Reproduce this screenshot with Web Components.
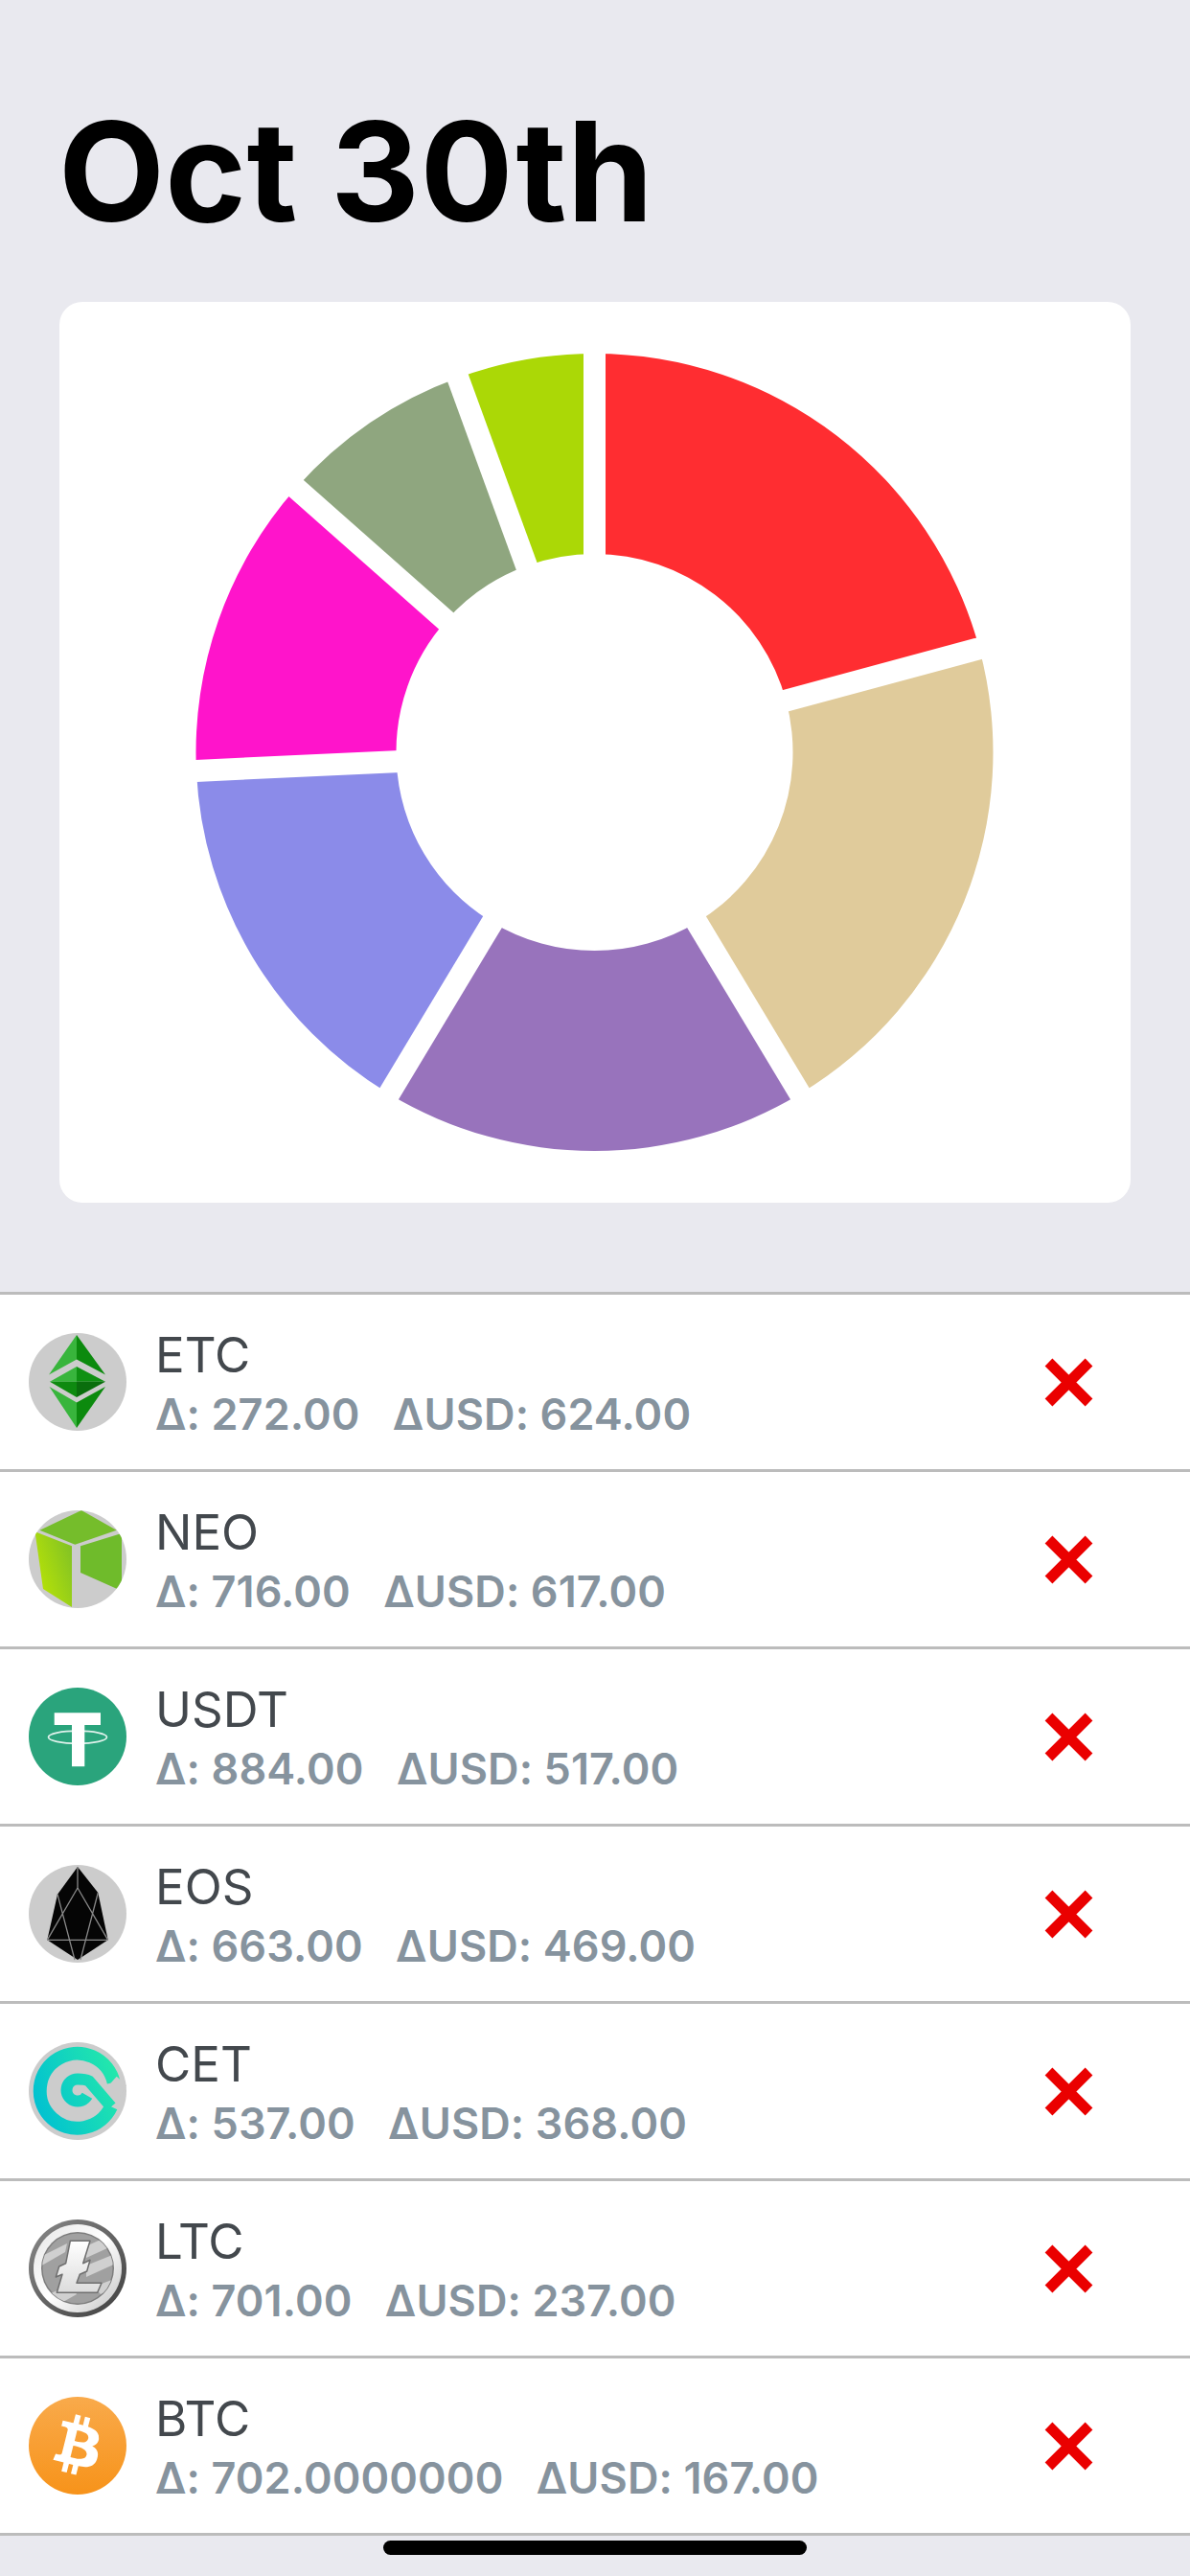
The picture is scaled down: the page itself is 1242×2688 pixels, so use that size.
<!DOCTYPE html>
<html lang="en"><head><meta charset="utf-8"><title>Oct 30th</title>
<style>
html,body{margin:0;padding:0;background:#e9e9ef;font-family:Inter,"Liberation Sans",sans-serif}
</style></head><body>
<portfolio-screen title="Oct 30th">
  <donut-chart values="624,617,517,469,368,237,167" colors="#ff2d31,#e0cb9b,#9873bc,#8b8be9,#ff14cb,#8fa67f,#abd806"></donut-chart>
  <coin-row slot="list" coin="ETC" delta="272.00" usd="624.00"></coin-row>
  <coin-row slot="list" coin="NEO" delta="716.00" usd="617.00"></coin-row>
  <coin-row slot="list" coin="USDT" delta="884.00" usd="517.00"></coin-row>
  <coin-row slot="list" coin="EOS" delta="663.00" usd="469.00"></coin-row>
  <coin-row slot="list" coin="CET" delta="537.00" usd="368.00"></coin-row>
  <coin-row slot="list" coin="LTC" delta="701.00" usd="237.00"></coin-row>
  <coin-row slot="list" coin="BTC" delta="702.0000000" usd="167.00"></coin-row>
</portfolio-screen>
<script>
const ICONS={
ETC:`<circle cx="51" cy="51" r="51" fill="#ccc"/>
<path d="M50 2 21 43.5 50 27.5z" fill="#38b53c"/><path d="M50 2 80 43.5 50 27.5z" fill="#0c8a0e"/>
<path d="M50 35 22 50.7 50 50.7z" fill="#38b53c"/><path d="M50 35 80 50.7 50 50.7z" fill="#0f9012"/>
<path d="M22 50.7 50 67V50.7z" fill="#0e8a10"/><path d="M80 50.7 50 67V50.7z" fill="#0a6e0d"/>
<path d="M21.500 56 50 72.500V99z" fill="#38b53c"/><path d="M80 56 50 72.500V99z" fill="#0c8a0e"/>`,
NEO:`<defs><clipPath id="c"><circle cx="51" cy="51" r="51"/></clipPath><linearGradient id="g" x1="0" y1="1" x2="1" y2="0.3"><stop offset="0" stop-color="#c2e900"/><stop offset="1" stop-color="#85c423"/></linearGradient></defs>
<circle cx="51" cy="51" r="51" fill="#ccc"/><g clip-path="url(#c)">
<path d="M55 0 11.500 20.700 48.300 35.700 91.700 20.700z" fill="#75bd2b"/>
<path d="M6.500 22.300 45 37.300V101L15 82z" fill="url(#g)"/>
<path d="M54 37.300 97 24V82L91.700 81.700 54 65z" fill="#6fbb2b"/></g>`,
USDT:`<circle cx="51" cy="51" r="51" fill="#2aa47c"/>
<path d="M26.700 26.300H75V39H58.300V82.300H45V39H26.700z" fill="#fff"/>
<ellipse cx="51" cy="51.700" rx="30.500" ry="6.500" fill="none" stroke="#fff" stroke-opacity=".85" stroke-width="1.700"/>`,
EOS:`<circle cx="51" cy="51" r="51" fill="#ccc"/>
<path d="M51 2 72.300 29 82.700 78.300 51 99 19.300 78.300 30 30.700z" fill="#050505"/>
<path d="M51 2V24M51 24 19.300 78.300M51 24 82.700 78.300M19.300 78.300H82.700M30 30.700 48 99M72.300 29 54 99" fill="none" stroke="#8a8a8a" stroke-width="1.300"/>`,
CET:`<defs><linearGradient id="g" gradientUnits="userSpaceOnUse" x1="5" y1="70" x2="95" y2="35"><stop offset="0" stop-color="#00c0d2"/><stop offset="1" stop-color="#24e8ab"/></linearGradient></defs>
<circle cx="51" cy="51" r="51" fill="#ccc"/>
<path d="M88.700 42A39 39 0 1 0 86 67.300" fill="none" stroke="url(#g)" stroke-width="14"/>
<path d="M91.700 35.700 80 49 92 62 102 45z" fill="#ccc"/>
<path d="M86 67.300 63 40.500Q59 38.500 51 38.500A11.500 11.500 0 1 0 61 55.700" fill="none" stroke="url(#g)" stroke-width="12" stroke-linejoin="miter"/>`,
LTC:`<defs><linearGradient id="o" x1="0" y1="0" x2="1" y2="1"><stop offset="0" stop-color="#8a8a8a"/><stop offset="1" stop-color="#3f3f3f"/></linearGradient>
<linearGradient id="r" x1="0" y1="0" x2="1" y2="1"><stop offset="0" stop-color="#e6e6e6"/><stop offset=".5" stop-color="#fff"/><stop offset="1" stop-color="#c4c4c4"/></linearGradient>
<linearGradient id="l" x1="0" y1="0" x2="0" y2="1"><stop offset="0" stop-color="#fff"/><stop offset="1" stop-color="#dcdcdc"/></linearGradient>
<clipPath id="d"><circle cx="51" cy="51" r="37"/></clipPath></defs>
<circle cx="51" cy="51" r="51" fill="url(#o)"/><circle cx="51" cy="51" r="46" fill="url(#r)"/><circle cx="51" cy="51" r="38" fill="#7d7d7d"/>
<circle cx="51" cy="51" r="36.500" fill="#a0a0a0"/>
<g clip-path="url(#d)" fill="#d0d0d0"><path d="M55 30 95 12V24L60 40z"/><path d="M60 48 95 34V44L60 60z"/><path d="M10 82 45 68 50 78 20 95z"/><path d="M68 70 95 60V68L75 78z"/><path d="M10 40 40 25 38 34 10 50z"/></g>
<path d="M43.300 22.300H64L56.700 45.700 64 42.300 60.700 54 53.300 57.300 50 66.300H76L71.700 76.300H29.300L35 57.300 28.300 60 31.700 49 38.700 45.700z" fill="url(#l)" stroke="#6f6f6f" stroke-width="1.500" stroke-linejoin="round"/>`,
BTC:`<defs><linearGradient id="g" x1="0" y1="0" x2="0" y2="1"><stop offset="0" stop-color="#f9aa4b"/><stop offset="1" stop-color="#f7931a"/></linearGradient></defs>
<circle cx="51" cy="51" r="51" fill="url(#g)"/>
<g transform="translate(51 51) scale(1.56) translate(-32 -32)"><path fill="#fff" d="M46.100 27.400c.6-4.300-2.600-6.600-7.100-8.100l1.500-5.800-3.500-.9-1.400 5.700c-.9-.2-1.900-.4-2.800-.7l1.400-5.700-3.500-.9-1.500 5.800c-.8-.2-1.500-.3-2.200-.5l-4.900-1.200-.9 3.800s2.600.6 2.600.6c1.400.4 1.700 1.300 1.600 2l-1.600 6.500-2.300 9.200c-.2.400-.6 1-1.600.8 0 0-2.600-.6-2.600-.6l-1.700 4 4.600 1.200c.9.2 1.700.4 2.500.6l-1.500 5.900 3.500.9 1.500-5.800c1 .3 1.900.5 2.800.7l-1.500 5.800 3.500.9 1.500-5.900c6 1.100 10.600.7 12.500-4.800 1.500-4.400-.1-6.900-3.200-8.600 2.300-.5 4-2 4.500-5.100zM38 38.300c-1.100 4.400-8.400 2-10.800 1.400l1.900-7.700c2.400.6 10 1.800 8.900 6.300zm1.100-11c-1 4-7.100 2-9.100 1.500l1.700-7c2 .5 8.400 1.400 7.400 5.500z"/></g>`
};
class PortfolioScreen extends HTMLElement{
  constructor(){super();this.attachShadow({mode:'open'}).innerHTML=`<style>
  :host{display:flex;flex-direction:column;min-height:2688px;background:#e9e9ef}
  h1{margin:0;padding:95px 61px 0;height:315px;box-sizing:border-box;font:700 144px/1.17 Inter,"Liberation Sans",sans-serif;letter-spacing:.4px;color:#000;white-space:nowrap}
  .card{margin:0 62px;height:940px;background:#fff;border-radius:24px;display:flex}
  .list{margin-top:93px;display:flex;flex-direction:column}
  .home{align-self:center;width:442px;height:15px;margin-top:5px;border-radius:8px;background:#000}
  </style><h1></h1><div class="card"><slot></slot></div><div class="list"><slot name="list"></slot></div><div class="home"></div>`;}
  connectedCallback(){this.shadowRoot.querySelector('h1').textContent=this.getAttribute('title');this.removeAttribute('title');}
}
class DonutChart extends HTMLElement{
  constructor(){super();this.attachShadow({mode:'open'});}
  connectedCallback(){
    const v=this.getAttribute('values').split(',').map(Number),c=this.getAttribute('colors').split(',');
    const sum=v.reduce((a,b)=>a+b,0),cx=558.5,cy=470,R=416,r=207,gap=23;
    const pt=(a,q)=>[(cx+q*Math.sin(a)).toFixed(2),(cy-q*Math.cos(a)).toFixed(2)];
    let a=0,arcs='',lines='';
    v.forEach((x,i)=>{const b=a+x/sum*2*Math.PI,l=(b-a)>Math.PI?1:0;
      arcs+=`<path fill="${c[i]}" d="M${pt(a,R)}A${R} ${R} 0 ${l} 1 ${pt(b,R)}L${pt(b,r)}A${r} ${r} 0 ${l} 0 ${pt(a,r)}Z"/>`;
      lines+=`<path d="M${pt(a,r-4)}L${pt(a,R+6)}"/>`;a=b;});
    this.shadowRoot.innerHTML=`<style>:host{display:block;width:1118px;height:940px}svg{display:block}</style>
    <svg width="1118" height="940" viewBox="0 0 1118 940">${arcs}<g stroke="#fff" stroke-width="${gap}">${lines}</g></svg>`;
  }
}
class CoinRow extends HTMLElement{
  constructor(){super();this.attachShadow({mode:'open'});}
  connectedCallback(){
    const n=this.getAttribute('coin');
    this.shadowRoot.innerHTML=`<style>
    :host{display:flex;align-items:center;box-sizing:border-box;height:185px;border-top:3px solid #bcbcbc;background:#fff;padding:0 101px 0 30px;font-family:Inter,"Liberation Sans",sans-serif}
    :host(:last-child){height:188px;border-bottom:3px solid #bcbcbc}
    .ic{width:102px;height:102px;flex:none;display:block;margin-right:30px}
    .t{flex:1;min-width:0;white-space:nowrap;padding-top:4px}
    .n{font-size:51px;line-height:60px;font-weight:400;color:#43484d}
    .s{font-size:45px;line-height:56px;font-weight:600;color:#86939e;white-space:pre;margin-top:4px;letter-spacing:.1px}
    .x{width:51px;height:51px;flex:none;display:block}
    </style>
    <svg class="ic" viewBox="0 0 102 102">${ICONS[n]}</svg>
    <div class="t"><div class="n">${n}</div><div class="s">Δ: ${this.getAttribute('delta')}   ΔUSD: ${this.getAttribute('usd')}</div></div>
    <svg class="x" viewBox="0 0 51 51"><path d="M4.500 4.500 46.500 46.500M46.500 4.500 4.500 46.500" stroke="#ea0000" stroke-width="11" fill="none"/></svg>`;
  }
}
customElements.define('portfolio-screen',PortfolioScreen);
customElements.define('donut-chart',DonutChart);
customElements.define('coin-row',CoinRow);
</script>
</body></html>
